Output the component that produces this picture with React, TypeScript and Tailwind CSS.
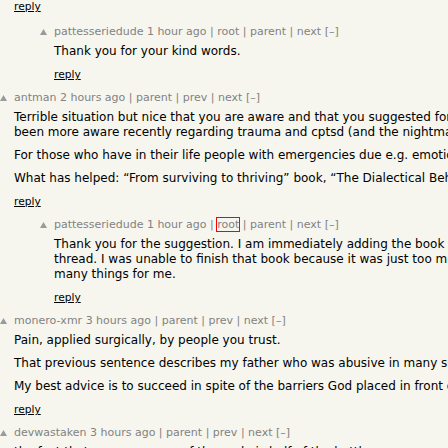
import React from "react";

type Comment = {
  level: number;
  user: string;
  age: string;
  links: string[];
  highlight?: string;
  paras: string[][];
};

const comments: Comment[] = [
  {
    level: 1,
    user: "pattesseriedude",
    age: "1 hour ago",
    links: ["root", "parent", "next"],
    paras: [["Thank you for your kind words."]],
  },
  {
    level: 0,
    user: "antman",
    age: "2 hours ago",
    links: ["parent", "prev", "next"],
    paras: [
      [
        "Terrible situation but nice that you are aware and that you suggested for others to get help. I've",
        "been more aware recently regarding trauma and cptsd (and the nightmares that come with it).",
      ],
      ["For those who have in their life people with emergencies due e.g. emotional dysregulation."],
      ["What has helped: \u201cFrom surviving to thriving\u201d book, \u201cThe Dialectical Behavior Therapy Skills Workbook\u201d."],
    ],
  },
  {
    level: 1,
    user: "pattesseriedude",
    age: "1 hour ago",
    links: ["root", "parent", "next"],
    highlight: "root",
    paras: [
      [
        "Thank you for the suggestion. I am immediately adding the book to my list from this",
        "thread. I was unable to finish that book because it was just too much, it explained too",
        "many things for me.",
      ],
    ],
  },
  {
    level: 0,
    user: "monero-xmr",
    age: "3 hours ago",
    links: ["parent", "prev", "next"],
    paras: [
      ["Pain, applied surgically, by people you trust."],
      ["That previous sentence describes my father who was abusive in many subtle ways."],
      ["My best advice is to succeed in spite of the barriers God placed in front of you."],
    ],
  },
  {
    level: 0,
    user: "devwastaken",
    age: "3 hours ago",
    links: ["parent", "prev", "next"],
    paras: [["the fact that you are aware of the cycle is half of the battle."]],
  },
];

function Arrow() {
  return (
    <svg width="7" height="6" viewBox="0 0 7 6">
      <polygon points="3.5,0 7,6 0,6" fill="#9a9a9a" />
    </svg>
  );
}

function CommentRow({ c }: { c: Comment }) {
  return (
    <div className="flex mt-[10px]">
      {c.level === 1 && <div className="w-[40px] shrink-0" />}
      <div className="w-[14px] shrink-0 pt-[4px]">
        <Arrow />
      </div>
      <div>
        <div className="text-[11px] leading-[14px] text-[#828282] whitespace-nowrap">
          {c.user} {c.age}
          {c.links.map((l) => (
            <span key={l}>
              {" | "}
              {c.highlight === l ? (
                <span className="outline outline-1 outline-[#ff0000]">{l}</span>
              ) : (
                l
              )}
            </span>
          ))}{" "}
          [–]
        </div>
        <div className="mt-[5px] text-[12px] leading-[15px] text-black whitespace-nowrap">
          {c.paras.map((p, i) => (
            <p key={i} className={i > 0 ? "mt-[8px]" : ""}>
              {p.map((line, j) => (
                <React.Fragment key={j}>
                  {j > 0 && <br />}
                  {line}
                </React.Fragment>
              ))}
            </p>
          ))}
        </div>
        <div className="mt-[9px] text-[10.67px] leading-[13px] text-black underline">reply</div>
      </div>
    </div>
  );
}

export default function App() {
  return (
    <div className="w-[448px] h-[448px] overflow-hidden bg-[#f6f6ef] font-[Verdana,'DejaVu_Sans',sans-serif]">
      <div className="pl-[14px] pb-[2px] text-[10.67px] leading-[13px] text-black underline">reply</div>
      {comments.map((c, i) => (
        <CommentRow key={i} c={c} />
      ))}
    </div>
  );
}
